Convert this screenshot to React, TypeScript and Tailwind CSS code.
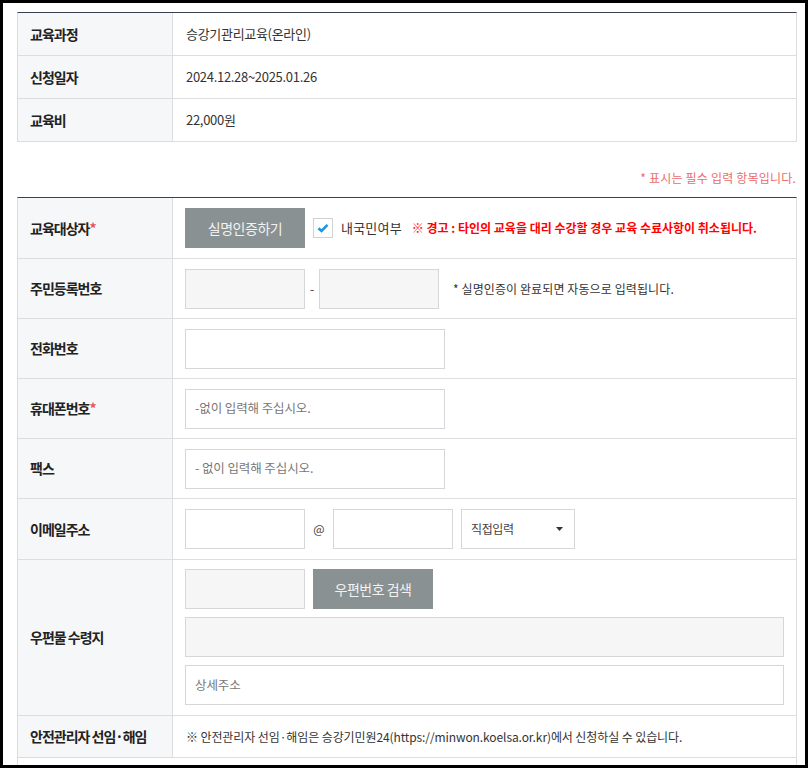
import React from 'react';

const font = { fontFamily: '"Noto Sans CJK KR", "Noto Sans", sans-serif' };

function Label({ children, required }: { children: React.ReactNode; required?: boolean }) {
  return (
    <div className="w-[155px] shrink-0 bg-[#f6f7f9] border-r border-[#dddddd] pl-3 flex items-center text-[14px] font-bold text-[#222] tracking-[-1px]">
      {children}
      {required && <span className="text-[#e8535a]">*</span>}
    </div>
  );
}

function Input({ w, disabled, placeholder }: { w: string; disabled?: boolean; placeholder?: string }) {
  return (
    <div
      className={`${w} h-10 border border-[#d4d6d9] ${disabled ? 'bg-[#f6f6f6]' : 'bg-white'} flex items-center pl-[9px] text-[12.5px] text-[#777] tracking-[-0.1px]`}
    >
      {placeholder}
    </div>
  );
}

export default function App() {
  return (
    <div style={font} className="w-[808px] h-[768px] border-[3px] border-black bg-white overflow-hidden pl-[14px] pr-[8px] pt-[9px]">
      {/* 과정 정보 */}
      <div className="border-t border-[#3d4050] border-x border-x-[#dddddd]">
        {[
          ['교육과정', '승강기관리교육(온라인)'],
          ['신청일자', '2024.12.28~2025.01.26'],
          ['교육비', '22,000원'],
        ].map(([k, v]) => (
          <div key={k} className="flex h-[43px] border-b border-[#dddddd]">
            <Label>{k}</Label>
            <div className="flex items-center pl-[13px] text-[13px] text-[#333] tracking-[-0.3px]">{v}</div>
          </div>
        ))}
      </div>

      <p className="pt-[27px] pb-[10px] text-right text-[12px] leading-[18px] text-[#ec6b6b] tracking-[0.2px] pr-px">
        * 표시는 필수 입력 항목입니다.
      </p>

      {/* 신청자 정보 */}
      <div className="border-t border-[#3d4050] border-x border-x-[#dddddd] h-[600px]">
        <div className="flex h-[61px] border-b border-[#dddddd]">
          <Label required>교육대상자</Label>
          <div className="flex items-center pl-3">
            <button className="w-[120px] h-10 bg-[#899193] text-[#f2f2f2] text-[14px] tracking-[-0.5px]">실명인증하기</button>
            <span className="ml-2 w-5 h-5 border border-[#cfd2d5] bg-white flex items-center justify-center">
              <svg width="12" height="10" viewBox="0 0 12 10">
                <path d="M1.5 5.2 L4.5 8 L10.5 1.8" fill="none" stroke="#1b96e6" strokeWidth="2.6" />
              </svg>
            </span>
            <span className="ml-2 text-[13px] text-[#333] tracking-[0.2px]">내국민여부</span>
            <span className="ml-[10px] text-[12px] font-bold text-[#ff0000] tracking-[0px]">
              ※ 경고 : 타인의 교육을 대리 수강할 경우 교육 수료사항이 취소됩니다.
            </span>
          </div>
        </div>

        <div className="flex h-[60px] border-b border-[#dddddd]">
          <Label>주민등록번호</Label>
          <div className="flex items-center pl-3">
            <Input w="w-[120px]" disabled />
            <span className="w-[14px] text-center text-[13px] text-[#555]">-</span>
            <Input w="w-[120px]" disabled />
            <span className="ml-[14px] text-[12px] text-[#333] tracking-[0.1px]">* 실명인증이 완료되면 자동으로 입력됩니다.</span>
          </div>
        </div>

        <div className="flex h-[60px] border-b border-[#dddddd]">
          <Label>전화번호</Label>
          <div className="flex items-center pl-3">
            <Input w="w-[260px]" />
          </div>
        </div>

        <div className="flex h-[60px] border-b border-[#dddddd]">
          <Label required>휴대폰번호</Label>
          <div className="flex items-center pl-3">
            <Input w="w-[260px]" placeholder="-없이 입력해 주십시오." />
          </div>
        </div>

        <div className="flex h-[60px] border-b border-[#dddddd]">
          <Label>팩스</Label>
          <div className="flex items-center pl-3">
            <Input w="w-[260px]" placeholder="- 없이 입력해 주십시오." />
          </div>
        </div>

        <div className="flex h-[61px] border-b border-[#dddddd]">
          <Label>이메일주소</Label>
          <div className="flex items-center pl-3">
            <Input w="w-[120px]" />
            <span className="w-7 text-center text-[12px] text-[#444]">@</span>
            <Input w="w-[120px]" />
            <div className="ml-2 w-[114px] h-10 border border-[#d4d6d9] bg-white flex items-center justify-between pl-[9px] pr-[11px] text-[12px] text-[#444] tracking-[-0.4px]">
              직접입력
              <svg width="7" height="4" viewBox="0 0 7 4">
                <path d="M0 0 H7 L3.5 4 Z" fill="#333" />
              </svg>
            </div>
          </div>
        </div>

        <div className="flex h-[156px] border-b border-[#dddddd]">
          <Label>우편물 수령지</Label>
          <div className="flex-1 flex flex-col gap-2 pl-3 pr-3 pt-[9px]">
            <div className="flex gap-2">
              <Input w="w-[120px]" disabled />
              <button className="w-[120px] h-10 bg-[#899193] text-[#f2f2f2] text-[14px] tracking-[-0.5px]">우편번호 검색</button>
            </div>
            <Input w="w-full" disabled />
            <Input w="w-full" placeholder="상세주소" />
          </div>
        </div>

        <div className="flex h-[42px] border-b border-[#dddddd]">
          <Label>안전관리자 선임·해임</Label>
          <div className="flex items-center pl-[13px] text-[12px] text-[#333] tracking-[-0.1px]">
            ※ 안전관리자 선임·해임은 승강기민원24(https://minwon.koelsa.or.kr)에서 신청하실 수 있습니다.
          </div>
        </div>
      </div>
    </div>
  );
}
